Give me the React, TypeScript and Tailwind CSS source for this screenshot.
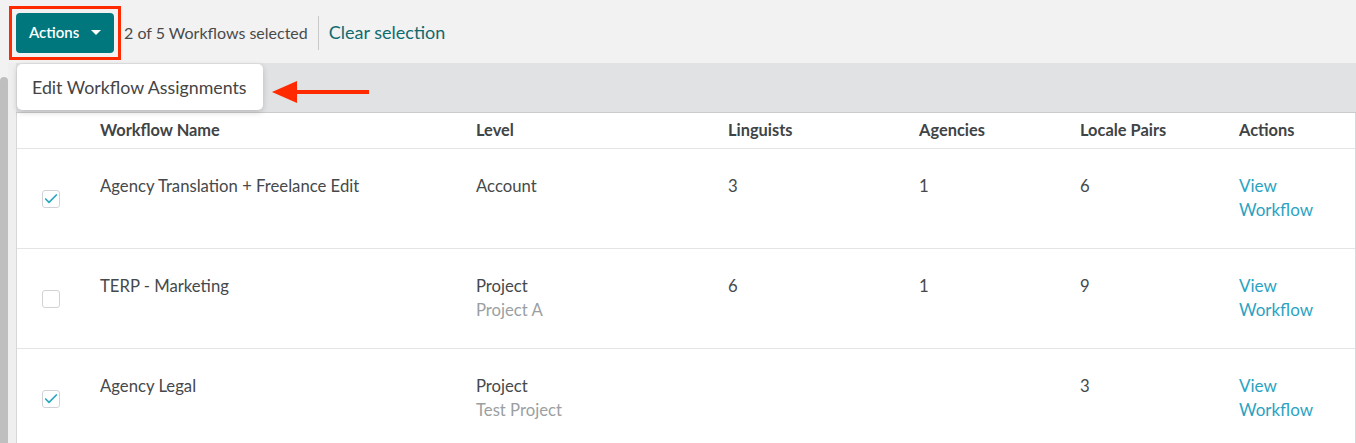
import { Check } from "lucide-react";

type Row = {
  name: string;
  level: string;
  sub?: string;
  linguists: string;
  agencies: string;
  pairs: string;
  checked: boolean;
};

const rows: Row[] = [
  { name: "Agency Translation + Freelance Edit", level: "Account", linguists: "3", agencies: "1", pairs: "6", checked: true },
  { name: "TERP - Marketing", level: "Project", sub: "Project A", linguists: "6", agencies: "1", pairs: "9", checked: false },
  { name: "Agency Legal", level: "Project", sub: "Test Project", linguists: "", agencies: "", pairs: "3", checked: true },
];

const cols = "grid grid-cols-[83px_376px_252px_191px_161px_159px_1fr]";

function Checkbox({ checked }: { checked: boolean }) {
  return (
    <div className="w-[18px] h-[18px] rounded-[3px] border border-[#cfd3d6] bg-white flex items-center justify-center">
      {checked && <Check className="w-[16px] h-[16px] text-[#2ba6c4]" strokeWidth={2.5} />}
    </div>
  );
}

export default function App() {
  return (
    <div className="relative h-[443px] overflow-hidden bg-[#f2f2f2] text-[#45494b]" style={{ fontFamily: "Lato, 'Open Sans', sans-serif" }}>
      {/* Selection toolbar */}
      <div className="h-[63px] flex items-center pl-[9px] pt-[2px]">
        <div className="p-[4px] border-[3px] border-[#ff2a00]">
          <button className="h-[40px] w-[98px] px-[13px] rounded-[4px] bg-[#00777d] text-white text-[15px] font-semibold flex items-center justify-between">
            Actions
            <span className="w-0 h-0 border-l-[5px] border-r-[5px] border-t-[5px] border-l-transparent border-r-transparent border-t-white" />
          </button>
        </div>
        <span className="ml-[3px] text-[16px] text-[#4a4a4a]">2 of 5 Workflows selected</span>
        <span className="mx-[10px] w-px h-[34px] bg-[#c9c9c9]" />
        <a className="text-[18px] text-[#0e6b70]">Clear selection</a>
      </div>

      <div className="flex">
        {/* Scroll rail */}
        <div className="w-4 flex">
          <div className="w-2 mt-[14px] h-[400px] rounded-t-[4px] bg-[#bfbfbf]" />
          <div className="w-2 bg-[#efefef]" />
        </div>

        <div className="flex-1">
          <div className="h-[50px] bg-[#e1e2e4] border-b border-[#c9cbcd]" />
          <div className="bg-white border-l border-r border-[#d5d7d9]">
            <div className={`${cols} h-[36px] items-center border-b border-[#e2e4e6] text-[16.4px] font-bold text-[#3f4446]`}>
              <div />
              <div>Workflow Name</div>
              <div>Level</div>
              <div>Linguists</div>
              <div>Agencies</div>
              <div>Locale Pairs</div>
              <div>Actions</div>
            </div>
            {rows.map((r) => (
              <div key={r.name} className={`${cols} h-[100px] border-b border-[#e2e4e6] text-[16.7px] leading-[24px]`}>
                <div className="flex items-center pl-[25px]">
                  <Checkbox checked={r.checked} />
                </div>
                <div className="pt-[25px]">{r.name}</div>
                <div className="pt-[25px]">
                  <div>{r.level}</div>
                  {r.sub && <div className="text-[#9b9fa2]">{r.sub}</div>}
                </div>
                <div className="pt-[25px]">{r.linguists}</div>
                <div className="pt-[25px]">{r.agencies}</div>
                <div className="pt-[25px]">{r.pairs}</div>
                <div className="pt-[25px] text-[17px] text-[#2aa3c2]">
                  View
                  <br />
                  Workflow
                </div>
              </div>
            ))}
          </div>
        </div>
      </div>

      {/* Open actions menu */}
      <div className="absolute left-[17px] top-[64px] w-[246px] h-[46px] rounded-[5px] bg-white shadow-[0_2px_6px_rgba(0,0,0,0.18)] flex items-center pl-[15px] text-[17.8px] text-[#444]">
        Edit Workflow Assignments
      </div>

      {/* Pointer arrow */}
      <svg className="absolute left-[272px] top-[80px]" width="100" height="24" viewBox="0 0 100 24">
        <polygon points="0,12 25,1 25,23" fill="#ff2a00" />
        <rect x="22" y="10" width="75" height="4" fill="#ff2a00" />
      </svg>
    </div>
  );
}
